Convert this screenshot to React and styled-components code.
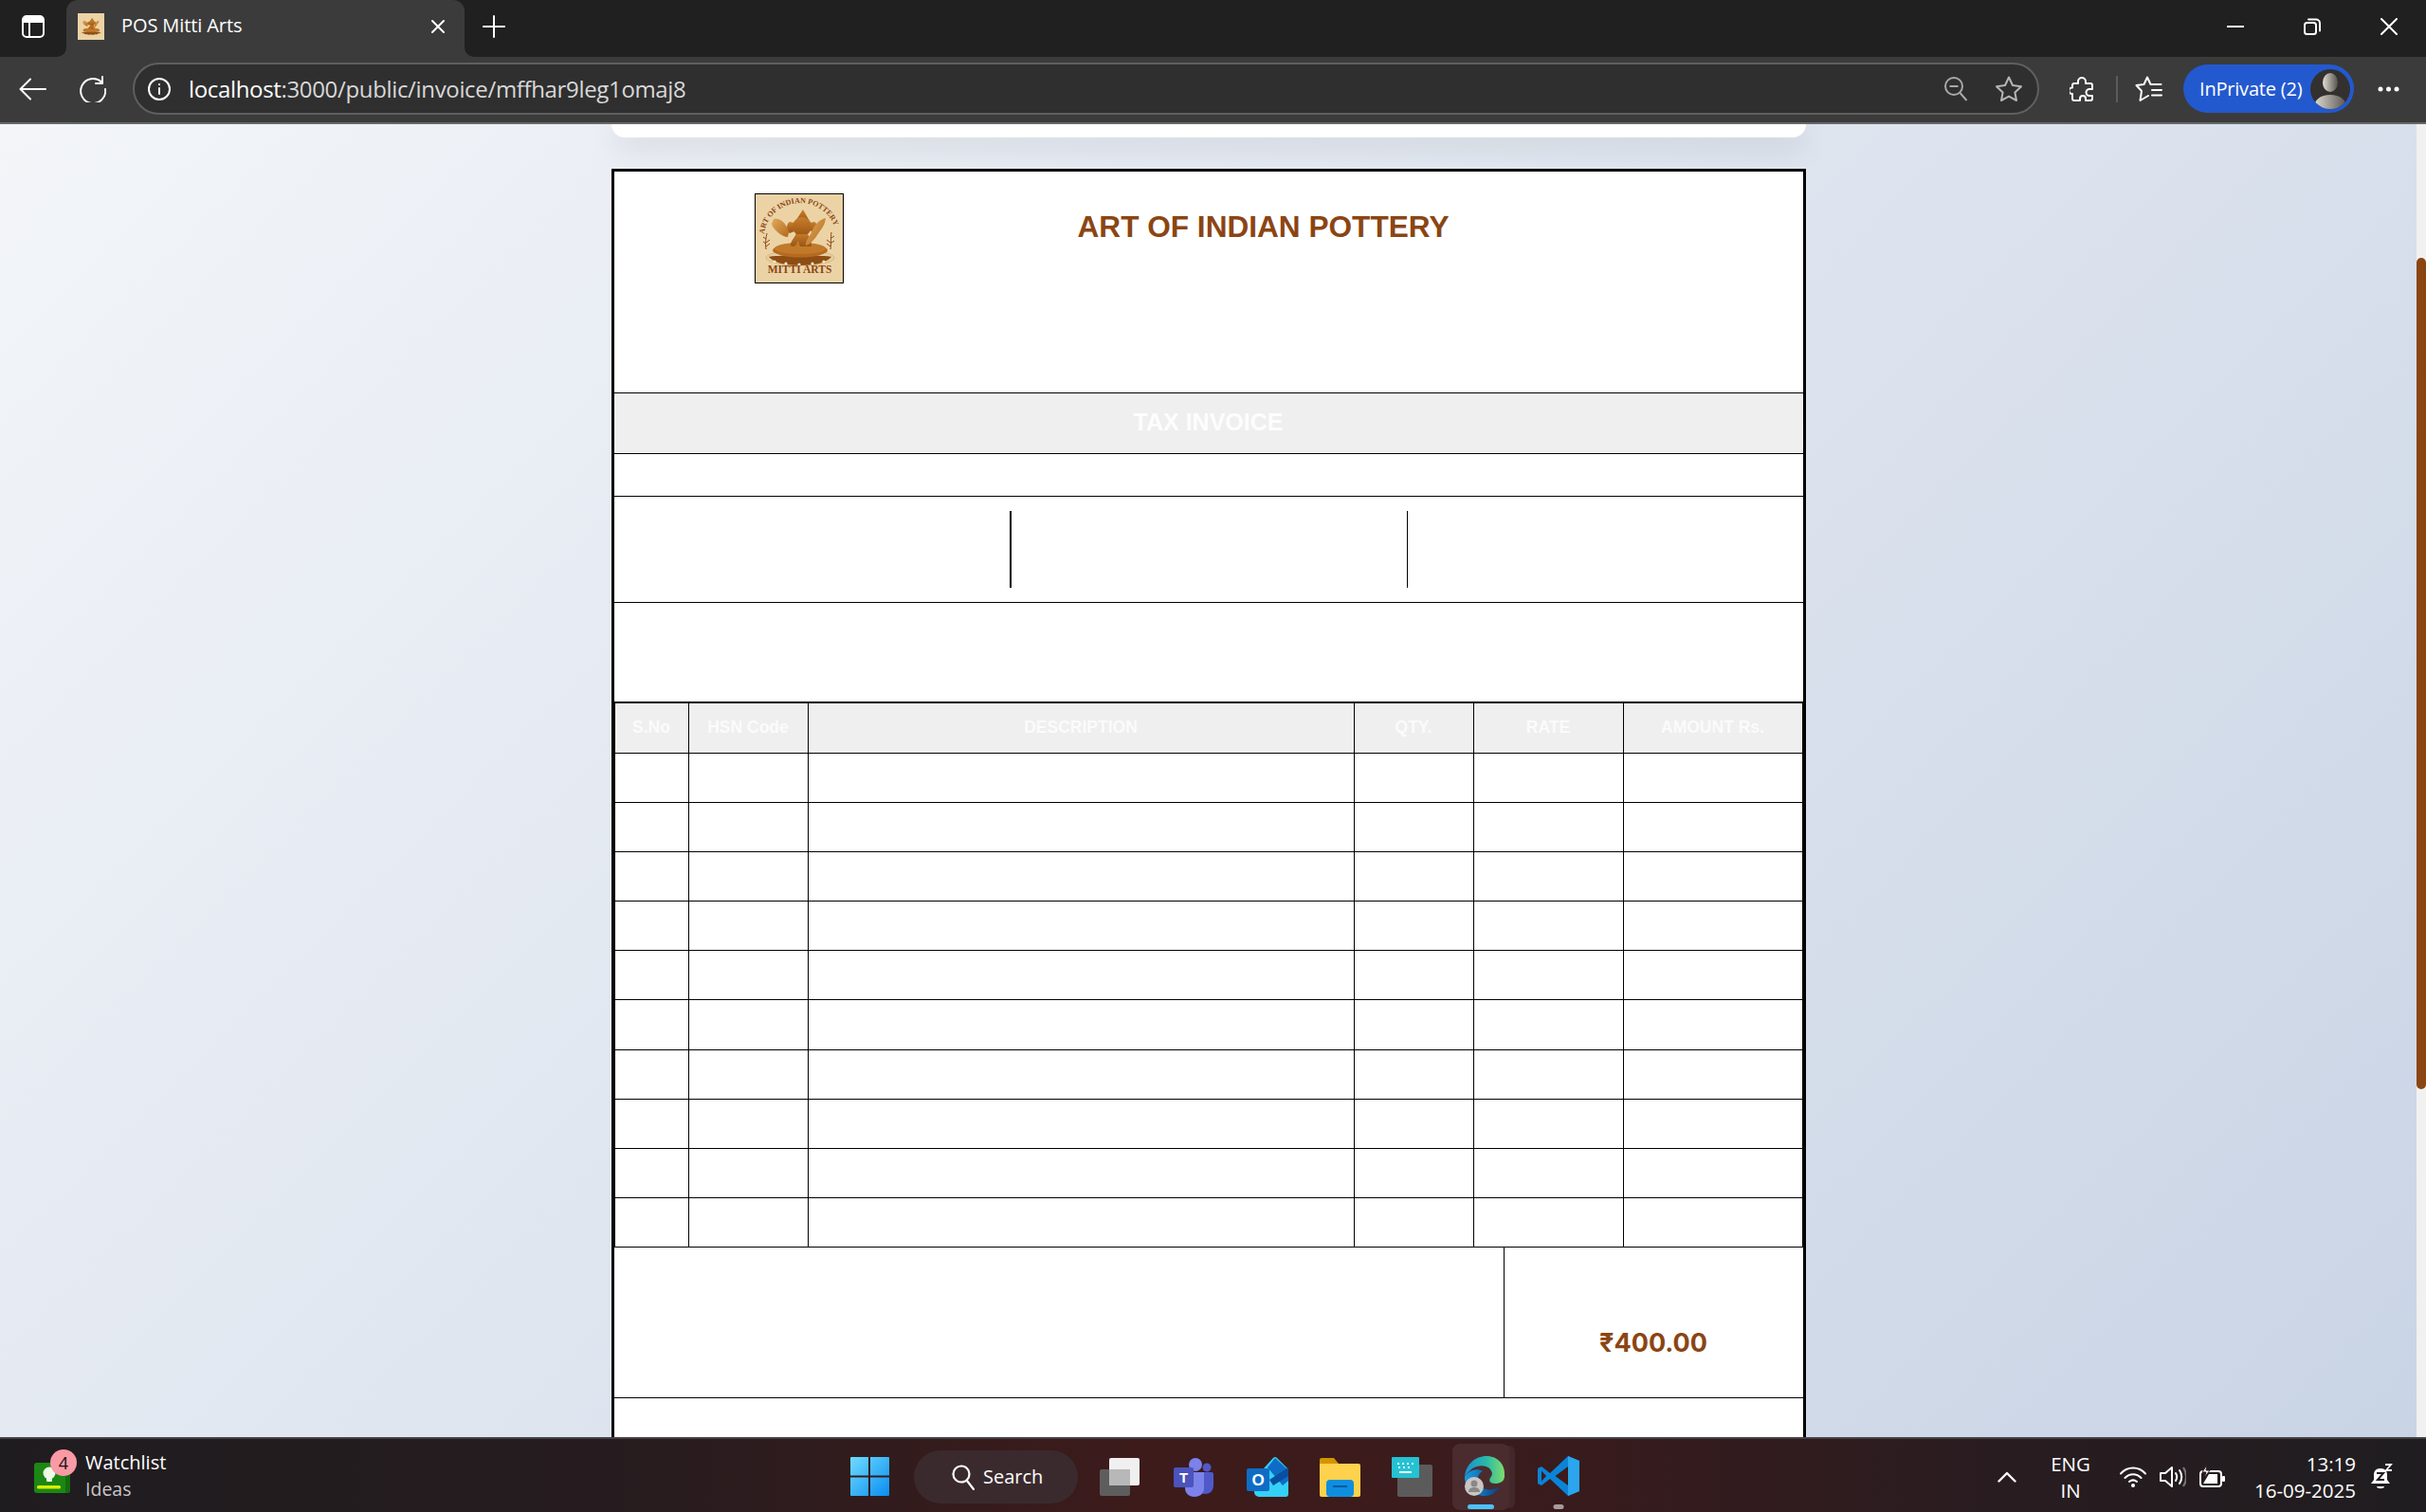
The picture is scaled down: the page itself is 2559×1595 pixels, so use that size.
import React from 'react';
import styled, { createGlobalStyle } from 'styled-components';

const Global = createGlobalStyle`
  html, body { margin: 0; padding: 0; overflow: hidden; background: #202020; }
  * { box-sizing: border-box; }
`;

const Screen = styled.div`
  width: 2559px; height: 1595px; display: flex; flex-direction: column; overflow: hidden;
  font-family: "Open Sans", "Noto Sans", sans-serif; color: #fff;
`;

/* ---------- browser chrome ---------- */
const TabBar = styled.div`
  flex: 0 0 60px; display: flex;
  background: linear-gradient(#202020 0 50%, #3b3b3b 50% 100%);
`;
const TabLeft = styled.div`
  flex: 0 0 70px; background: #202020; border-bottom-right-radius: 10px;
  display: flex; align-items: center; justify-content: center; padding: 0 1px 4px 0;
`;
const Tab = styled.div`
  flex: 0 0 420px; height: 60px; background: #3b3b3b; border-radius: 12px 12px 0 0;
  display: flex; align-items: center; padding: 0 20px 4px 12px;
`;
const TabTitle = styled.span`
  margin-left: 18px; font-size: 20px; flex: 1; white-space: nowrap; letter-spacing: -0.1px; line-height: 26px; padding-bottom: 2px;
`;
const TabRight = styled.div`
  flex: 1; background: #202020; border-bottom-left-radius: 10px;
  display: flex; align-items: center; padding-left: 19px; padding-bottom: 4px;
`;
const WinControls = styled.div`
  margin-left: auto; margin-right: -1px; display: flex;
`;
const WinButton = styled.div`
  width: 81px; height: 56px; display: flex; align-items: center; justify-content: center;
`;
const Toolbar = styled.div`
  flex: 0 0 71px; background: #3b3b3b; border-bottom: 2px solid #686868;
  display: flex; align-items: center; padding: 0 0 2px 20px;
`;
const Slot = styled.div`
  flex: 0 0 ${p => p.$w}px; margin-left: ${p => p.$ml || 0}px;
  display: flex; align-items: center; justify-content: center;
`;
const AddressBar = styled.div`
  flex: 0 0 2011px; margin-left: 28px; height: 55px; border-radius: 28px;
  background: #2f2f2f; border: 2px solid #5f5f5f;
  display: flex; align-items: center; padding: 0 16px 0 14px;
`;
const Url = styled.div`
  margin-left: 19px; flex: 1; font-size: 24px; letter-spacing: -0.34px; color: #d8d8d8; white-space: nowrap;
  & > b { font-weight: 400; color: #fff; }
`;
const Divider = styled.div`
  flex: 0 0 2px; height: 28px; margin-left: 23px; background: #5c5c5c;
`;
const ProfilePill = styled.div`
  flex: 0 0 180px; height: 51px; margin-left: 22px; border-radius: 26px; background: #2359cf;
  display: flex; align-items: center; padding: 0 4px 0 17px; font-size: 20px; letter-spacing: -0.2px;
  justify-content: space-between;
`;
const Avatar = styled.div`
  width: 42px; height: 42px; border-radius: 50%; overflow: hidden; background: #33312f; flex: none;
`;

/* ---------- page ---------- */
const Viewport = styled.div`
  flex: 1; min-height: 0; display: flex; overflow: hidden;
`;
const Page = styled.main`
  flex: 1; min-width: 0; overflow: hidden; display: flex; flex-direction: column; align-items: center;
  background: linear-gradient(135deg, #f5f7fa 0%, #c3cfe2 100%) no-repeat 0 -222px / 2549px 2187px;
`;
const ClippedCard = styled.div`
  flex: 0 0 14px; width: 1260px; background: #fff; border-radius: 0 0 20px 20px;
  box-shadow: 0 8px 32px rgba(0, 0, 0, 0.14);
`;
const Invoice = styled.section`
  flex: none; width: 1260px; margin-top: 33px; border: 3px solid #000; background: #fff;
  font-family: "Liberation Sans", Arial, sans-serif;
`;
const InvoiceHead = styled.header`
  height: 234px; border-bottom: 1px solid #000; display: flex; align-items: flex-start;
  padding: 23px 0 0 148px;
`;
const LogoFrame = styled.div`
  width: 94px; height: 95px; border: 1px solid #000; flex: none;
  & > svg { display: block; }
`;
const CompanyName = styled.h1`
  margin: 16px 0 0 247px; font-size: 31.6px; line-height: 38px; font-weight: 700; color: #8b4513; white-space: nowrap;
`;
const TaxBand = styled.div`
  height: 64px; border-bottom: 1px solid #000; background: #efefef; color: #fdfdfd;
  font-size: 25px; font-weight: 700; display: flex; align-items: center; justify-content: center; padding-bottom: 3px;
`;
const BlankRow = styled.div`
  height: ${p => p.$h}px; ${p => p.$line ? 'border-bottom: 1px solid #000;' : ''}
`;
const MetaRow = styled.div`
  height: 112px; border-bottom: 1px solid #000; display: flex; padding-top: 15px;
`;
const MetaCell = styled.div`
  height: 81px; flex: 0 0 ${p => p.$w}px; ${p => p.$w2 ? `border-right: ${p.$w2}px solid #000;` : ''}
`;
const TableWrap = styled.div`
  border-top: 2px solid #000; border-left: 1px solid #000; border-right: 1px solid #000;
`;
const GridRow = styled.div`
  display: grid; grid-template-columns: 78px 126px 576px 126px 158px 1fr;
  height: ${p => p.$head ? 53 : 52.1}px; border-bottom: 1px solid #000;
  background: ${p => p.$head ? '#efefef' : '#fff'};
`;
const HeadCell = styled.div`
  border-right: 1px solid #000; color: #fbfbfb; font-size: 17.5px; font-weight: 700; padding-bottom: 2px;
  display: flex; align-items: center; justify-content: center;
  &:last-child { border-right: 0; }
`;
const Cell = styled.div`
  border-right: 1px solid #000;
  &:last-child { border-right: 0; }
`;
const Totals = styled.div`
  height: 159px; border-bottom: 1px solid #000; display: flex;
`;
const TotalsLeft = styled.div`
  flex: 0 0 938px; border-right: 1px solid #000; margin-left: 1px;
`;
const TotalsAmount = styled.div`
  flex: 1; display: flex; align-items: flex-end; justify-content: center; padding: 0 0 40px 0;
  color: #8b4513; font-family: Inter, "Liberation Sans", sans-serif; font-size: 27px; font-weight: 700; line-height: 34px;
`;
const AfterTotals = styled.div` height: 140px; `;
const Scrollbar = styled.div`
  flex: 0 0 10px; background: #f1f1f1; padding-top: 141px;
`;
const Thumb = styled.div`
  height: 877px; background: #8b4513; border-radius: 5px;
`;

/* ---------- taskbar ---------- */
const Taskbar = styled.footer`
  flex: 0 0 79px; display: flex; align-items: center; border-top: 2px solid #454045; padding-top: 2px;
  background: linear-gradient(90deg, #1f1c1f 0%, #261c1f 25%, #3d1b1b 47%, #3c1b1c 60%, #291c20 82%, #1f1d20 100%);
`;
const WidgetArea = styled.div`
  flex: 0 0 897px; display: flex; align-items: center; padding-left: 36px;
`;
const WidgetIcon = styled.div`
  position: relative; width: 38px; height: 32px; flex: none; top: 1px;
`;
const WidgetBadge = styled.div`
  position: absolute; left: 17px; top: -14px; width: 28px; height: 28px; border-radius: 50%;
  background: #f99aa5; color: #111; font-size: 18px; display: flex; align-items: center; justify-content: center;
`;
const WidgetText = styled.div`
  margin: -2px 0 0 16px; display: flex; flex-direction: column; line-height: 28px;
`;
const WidgetTitle = styled.span` font-size: 20px; color: #fff; `;
const WidgetSub = styled.span` font-size: 19.5px; color: #c9c6c8; `;
const SearchPill = styled.div`
  flex: 0 0 173px; height: 56px; margin-left: 26px; border-radius: 28px; background: #3a2a2d;
  display: flex; align-items: center; padding-left: 40px; gap: 9px; font-size: 20px;
`;
const EdgeTile = styled.div`
  position: relative; flex: 0 0 60px; height: 70px; margin-left: 21px; border-radius: 8px;
  background: #4a2c2f; display: flex; align-items: center; justify-content: center; padding: 0 0 2px 8px;
  box-shadow: 8px 0 0 -2px #43282b;
`;
const RunDot = styled.span`
  position: absolute; bottom: 1px; left: 50%; transform: translateX(-50%);
  width: ${p => p.$w}px; height: 5px; border-radius: 3px; background: ${p => p.$c};
`;
const VsSlot = styled.div`
  position: relative; flex: 0 0 44px; height: 70px; margin-left: 30px;
  display: flex; align-items: center; justify-content: center; padding-bottom: 2px;
`;
const Lang = styled.div`
  flex: 0 0 60px; margin-left: 27px; text-align: center; font-size: 20.5px; line-height: 28px; color: #fff;
`;
const Clock = styled.div`
  flex: 0 0 110px; margin-left: 27px; text-align: right; font-size: 20.5px; line-height: 28px; white-space: nowrap; color: #fff;
`;

/* ---------- drawings ---------- */
const Line = { fill: 'none', stroke: 'currentColor', strokeWidth: 2, strokeLinecap: 'round', strokeLinejoin: 'round' };

const MittiLogo = ({ size = 92, detail = true }) => {
  const id = detail ? 'big' : 'small';
  return (
    <svg width={size} height={size * 93 / 92} viewBox="0 0 92 93">
      <defs>
        <path id={`arc-${id}`} d="M9 45 A36 34 0 0 1 85 45" />
        <linearGradient id={`clay-${id}`} x1="0" y1="0" x2="0" y2="1">
          <stop offset="0" stopColor="#c77e2c" />
          <stop offset="1" stopColor="#9c5514" />
        </linearGradient>
        <linearGradient id={`hand-${id}`} x1="0" y1="0" x2="1" y2="1">
          <stop offset="0" stopColor="#e0a95c" />
          <stop offset="1" stopColor="#b36a1e" />
        </linearGradient>
      </defs>
      <rect width="92" height="93" fill="#ecd3a6" />
      {detail && (
        <text fontFamily="Liberation Serif, serif" fontWeight="700" fontSize="8" fill="#8b4513">
          <textPath href={`#arc-${id}`} startOffset="3">ART OF INDIAN POTTERY</textPath>
        </text>
      )}
      <ellipse cx="47" cy="67" rx="36" ry="8" fill="#e6cfa0" stroke="#c9a567" strokeWidth="0.6" />
      <path d="M14 66c4 5 15 9 33 9s29-4 33-9c-3-2-64-2-66 0Z" fill="#8e4d12" />
      <ellipse cx="47" cy="59" rx="29" ry="7.500" fill="#b56a20" />
      <ellipse cx="47" cy="57" rx="27" ry="6" fill="#c27a2a" />
      <g fill={`url(#clay-${id})`}>
        <path d="M50 16 58 30H41Z" />
        <path d="M36 29c-4 2-4 10 0 12l5-2V30ZM62 29c4 2 4 9 0 11l-5-2v-8Z" />
        <circle cx="49" cy="34" r="10" />
        <path d="M43 40c-1 5-5 8-6 12-1 3 3 4 5 2l3-4 2 5h12c0-5-1-9-4-13H43Z" />
      </g>
      <path d="M19 26c8-2 14 6 16 14l-1 5c-6 0-16-8-17-14Z" fill={`url(#hand-${id})`} />
      <path d="M74 25c-1 9-6 13-9 18-3 5-8 10-12 11-1-5 4-9 6-14 2-7 9-14 15-15Z" fill={`url(#hand-${id})`} />
      <g fill="#f6ead0">
        <circle cx="20" cy="71" r="1.600" /><circle cx="32" cy="73" r="1.600" /><circle cx="46" cy="74" r="1.600" />
        <circle cx="60" cy="73" r="1.600" /><circle cx="72" cy="71" r="1.600" />
      </g>
      {detail && (
        <g fill="none" stroke="#8b4513" strokeWidth="1">
          <path d="M11 58C10 50 11 46 12 41M11 51l4-3M11 55l4-3M11 47l-3-2M11 52l-3-2" />
          <path d="M79 58c1-8 0-12 1-18M79 51l-4-3M79 55l-4-3M80 46l3-2M80 51l3-2" />
        </g>
      )}
      {detail && (
        <text x="46.500" y="83" textAnchor="middle" fontFamily="Liberation Serif, serif" fontWeight="700" fontSize="11.500" fill="#8b4513">MITTI ARTS</text>
      )}
    </svg>
  );
};

const Back = () => <svg width="29" height="24" viewBox="0 0 29 24"><path {...Line} d="M28 12H2M12 1.500 1.500 12 12 22.500" /></svg>;
const Refresh = () => <svg width="28" height="28" viewBox="0 0 28 28"><path {...Line} d="M23 6.500A13 13 0 1 0 27 14M24 1v7h-7" /></svg>;
const Info = () => <svg width="24" height="24" viewBox="0 0 24 24"><circle cx="12" cy="12" r="11" {...Line} /><path {...Line} d="M12 11v6M12 7v.2" /></svg>;
const ZoomOut = () => <svg width="24" height="26" viewBox="0 0 24 26"><circle cx="10" cy="10" r="9" fill="none" stroke="#a8a8a8" strokeWidth="2" /><path d="M5.500 10h9M16.500 17l7 8" fill="none" stroke="#a8a8a8" strokeWidth="2" /></svg>;
const Star = () => <svg width="28" height="27" viewBox="0 0 28 27"><path fill="none" stroke="#b5b5b5" strokeWidth="2" strokeLinejoin="round" d="M14 1.500 18 10l9 1.200-6.600 6.300L22 26l-8-4.400L6 26l1.600-8.500L1 11.200 10 10Z" /></svg>;
const Puzzle = () => <svg width="26" height="28" viewBox="0 0 26 28"><path {...Line} d="M9 6a4 4 0 0 1 8 0v2h5a2 2 0 0 1 2 2v4h-3a3.500 3.500 0 0 0 0 7h3v3a2 2 0 0 1-2 2h-5v-2a3 3 0 0 0-6 0v2H5a2 2 0 0 1-2-2v-5H2.500a3.200 3.200 0 0 1 0-6.400H3V10a2 2 0 0 1 2-2h4Z" /></svg>;
const FavList = () => <svg width="29" height="28" viewBox="0 0 29 28"><path {...Line} d="M16.500 9h11M18 15h10M18 20.500h10M16.500 9 13 1.500 9.500 9l-8 1L7 16 5.500 26l8.500-5" /></svg>;
const Dots = () => <svg width="23" height="6" viewBox="0 0 23 6"><circle cx="3" cy="3" r="2.500" fill="#fff" /><circle cx="11.500" cy="3" r="2.500" fill="#fff" /><circle cx="20" cy="3" r="2.500" fill="#fff" /></svg>;
const SideIcon = () => <svg width="26" height="26" viewBox="0 0 26 26"><rect x="2" y="2" width="22" height="22" rx="4" {...Line} /><path d="M3 3h20v6H3z" fill="#fff" /><path {...Line} d="M9 8v16" /></svg>;
const TabClose = () => <svg width="16" height="16" viewBox="0 0 16 16"><path {...Line} d="M2 2l12 12M14 2 2 14" /></svg>;
const Plus = () => <svg width="24" height="24" viewBox="0 0 24 24"><path {...Line} d="M12 1v22M1 12h22" /></svg>;
const WinMin = () => <svg width="18" height="2" viewBox="0 0 18 2"><path d="M0 1h18" stroke="#fff" strokeWidth="2" /></svg>;
const WinRestore = () => <svg width="18" height="18" viewBox="0 0 18 18"><rect x="1" y="5" width="12" height="12" rx="2.500" {...Line} /><path {...Line} d="M5 1.500h8a4 4 0 0 1 4 4v8" /></svg>;
const WinClose = () => <svg width="18" height="18" viewBox="0 0 18 18"><path {...Line} d="M1 1l16 16M17 1 1 17" /></svg>;
const AvatarArt = () => (
  <svg width="42" height="42" viewBox="0 0 42 42">
    <defs>
      <linearGradient id="av" x1="0" x2="1"><stop offset="0" stopColor="#e3dfd6" /><stop offset="1" stopColor="#55524d" /></linearGradient>
    </defs>
    <ellipse cx="21" cy="14" rx="8" ry="10" fill="url(#av)" />
    <path d="M3 42c1-10 8-15 18-15s17 5 18 15Z" fill="url(#av)" />
  </svg>
);

const WidgetArt = () => (
  <svg width="38" height="32" viewBox="0 0 38 32">
    <path d="M3 0h30v32H3a3 3 0 0 1-3-3V3a3 3 0 0 1 3-3Z" fill="#1c8714" />
    <path d="M33 1h2a3 3 0 0 1 3 3v26a2 2 0 0 1-2 2h-3Z" fill="#136b10" />
    <circle cx="16" cy="11" r="6.500" fill="#eefbe6" /><rect x="13" y="16" width="6" height="4" rx="1" fill="#eefbe6" />
    <rect x="3" y="24" width="25" height="3.500" rx="1.500" fill="#d6ee00" />
  </svg>
);
const StartLogo = () => (
  <svg width="41" height="41" viewBox="0 0 41 41">
    <defs>
      <linearGradient id="win" x1="0" y1="0" x2="1" y2="1"><stop offset="0" stopColor="#6fdcff" /><stop offset="1" stopColor="#0a8df0" /></linearGradient>
    </defs>
    <path fill="url(#win)" d="M1 0h18v19.500H0V1a1 1 0 0 1 1-1ZM21 0h19a1 1 0 0 1 1 1v18.500H21ZM0 21.500h19V41H1a1 1 0 0 1-1-1ZM21 21.500h20V40a1 1 0 0 1-1 1H21Z" />
  </svg>
);
const SearchGlass = () => <svg width="24" height="28" viewBox="0 0 24 28"><circle cx="10" cy="11" r="8.500" fill="none" stroke="#fff" strokeWidth="2.200" /><path d="M16 18l7 9" stroke="#fff" strokeWidth="2.200" strokeLinecap="round" /></svg>;
const TaskView = () => (
  <svg width="43" height="40" viewBox="0 0 43 40">
    <rect x="0" y="12" width="32" height="28" rx="2" fill="#5e5d5e" />
    <rect x="10" y="0" width="32" height="29" rx="2" fill="#f1f0f0" />
    <rect x="10" y="12" width="22" height="17" fill="#b9b8b8" />
  </svg>
);
const Teams = () => (
  <svg width="42" height="42" viewBox="0 0 42 42">
    <circle cx="23" cy="8" r="7" fill="#7b83eb" /><circle cx="35" cy="11" r="4.500" fill="#5059c9" />
    <path d="M27 16h13a2 2 0 0 1 2 2v12c0 6-4 9-9 9-3 0-4-1-6-2Z" fill="#5059c9" />
    <path d="M12 16h20v17c0 5-4 9-10 9s-10-4-10-9Z" fill="#7b83eb" />
    <rect x="0" y="11" width="21" height="21" rx="2" fill="#4b53bc" />
    <text x="10.500" y="27" textAnchor="middle" fontFamily="Liberation Sans, sans-serif" fontWeight="700" fontSize="15" fill="#fff">T</text>
  </svg>
);
const Outlook = () => (
  <svg width="45" height="44" viewBox="0 0 45 44">
    <path d="M8 24 28 2a3 3 0 0 1 4 0l12 12v26a3 3 0 0 1-3 3H13a5 5 0 0 1-5-5Z" fill="#35d0f5" />
    <path d="M22 12 30 2l14 13v11L38 31Z" fill="#0f6cc6" /><path d="M24 25 44 12v9L28 31Z" fill="#0a4f9e" />
    <rect x="0" y="13" width="24" height="24" rx="2" fill="#0f6cc6" />
    <text x="12" y="31" textAnchor="middle" fontFamily="Liberation Sans, sans-serif" fontWeight="700" fontSize="17" fill="#fff">O</text>
  </svg>
);
const Explorer = () => (
  <svg width="43" height="42" viewBox="0 0 43 42">
    <path d="M0 3a2 2 0 0 1 2-2h13l5 6h-20Z" fill="#d49400" />
    <path d="M0 7h41a2 2 0 0 1 2 2v31a2 2 0 0 1-2 2H2a2 2 0 0 1-2-2Z" fill="#ffd24d" />
    <rect x="7" y="24" width="29" height="18" rx="4" fill="#0f8ee0" /><rect x="14" y="30" width="15" height="2" fill="#075aa4" />
  </svg>
);
const KeyApp = () => (
  <svg width="43" height="42" viewBox="0 0 43 42">
    <rect x="6" y="8" width="37" height="34" rx="2" fill="#5b5b5c" />
    <rect x="0" y="0" width="29" height="22" rx="1" fill="#25c2d3" />
    <path d="M6 7h2M11 7h2M16 7h2M21 7h2M7 11h2M12 11h2M17 11h2M8 16h13" stroke="#eafcff" strokeWidth="1.800" />
  </svg>
);
const EdgeIcon = () => (
  <svg width="44" height="44" viewBox="0 0 44 44">
    <defs>
      <linearGradient id="edge-top" x1="0" x2="1"><stop offset="0" stopColor="#1a8fd6" /><stop offset="0.55" stopColor="#2bb9a6" /><stop offset="1" stopColor="#7fdc6c" /></linearGradient>
      <linearGradient id="edge-low" x1="0" x2="1"><stop offset="0" stopColor="#1b9de2" /><stop offset="1" stopColor="#0a3f86" /></linearGradient>
    </defs>
    <path fill="url(#edge-top)" d="M1 23C2 10 12 1 24 1c12 0 20 9 19 21 0 6-5 8-10 8s-7-3-5-6c2-3 3-5 0-9C24 10 14 10 8 15c-3 3-6 5-7 8Z" />
    <path fill="url(#edge-low)" d="M1 23c4-7 13-10 19-6-6 3-7 11-2 16 6 6 16 3 20 0-4 7-10 10-16 10C10 43 1 34 1 23Z" />
    <circle cx="11" cy="33" r="10" fill="#c9c6c4" />
    <circle cx="11" cy="30" r="3.500" fill="#8a8886" /><path d="M5 39c0-4 3-5 6-5s6 1 6 5Z" fill="#8a8886" />
  </svg>
);
const VsCode = () => (
  <svg width="44" height="42" viewBox="0 0 44 42">
    <path d="M32 0 13 18 4 11 0 13v16l4 2 9-7 19 18 12-5V5Z" fill="#0a84d8" />
    <path d="M32 0 44 5v32l-12 5Z" fill="#2aa5ee" />
    <path d="M32 11 18.500 21 32 31Z" fill="#3c1b1c" />
    <path d="M4 15.500 9 21l-5 5.500Z" fill="#3c1b1c" />
  </svg>
);
const Chevron = () => <svg width="20" height="12" viewBox="0 0 20 12"><path {...Line} strokeWidth="2.400" d="M1.500 10.500 10 2l8.500 8.500" /></svg>;
const Wifi = () => <svg width="28" height="22" viewBox="0 0 28 22"><path {...Line} d="M1 7.500C8-.5 20-.5 27 7.500M5.500 12c5-5 12-5 17 0M10 16c2.500-2 5.500-2 8 0" /><circle cx="14" cy="20" r="2" fill="#fff" /></svg>;
const Speaker = () => <svg width="28" height="24" viewBox="0 0 28 24"><path {...Line} d="M1 8v8h5l7 6V2L6 8Z" /><path {...Line} d="M17 8c1.500 2.500 1.500 5.500 0 8M21 5c3 4 3 10 0 14" /><path d="M25 2c4 6 4 14 0 20" fill="none" stroke="#777" strokeWidth="2" /></svg>;
const Battery = () => <svg width="28" height="26" viewBox="0 0 28 26"><rect x="1" y="7" width="22" height="16" rx="3" {...Line} /><path d="M4 20l6-10h9v10Z" fill="#fff" /><rect x="24" y="12" width="3" height="6" rx="1" fill="#fff" /><path d="M8 0 3 8h4l-2 6 6-8H7Z" fill="#fff" stroke="#2a1c20" /></svg>;
const BellSnooze = () => (
  <svg width="24" height="28" viewBox="0 0 24 28">
    <path d="M11 5c5 0 7 3 7 7v5l3 4H1l3-4v-5c0-4 2-7 7-7Z" fill="#fff" />
    <path d="M7 24h8c0 3-8 3-8 0Z" fill="#fff" />
    <path d="M7 10h7l-6 7h7" fill="none" stroke="#201d20" strokeWidth="2" />
    <path d="M16 1h6l-5 6h6" fill="none" stroke="#fff" strokeWidth="1.800" />
  </svg>
);

const columns = ['S.No', 'HSN Code', 'DESCRIPTION', 'QTY.', 'RATE', 'AMOUNT Rs.'];
const rows = Array.from({ length: 10 }, (_, i) => i);

export default function App() {
  return (
    <Screen>
      <Global />
      <TabBar>
        <TabLeft><SideIcon /></TabLeft>
        <Tab>
          <MittiLogo size={28} detail={false} />
          <TabTitle>POS Mitti Arts</TabTitle>
          <TabClose />
        </Tab>
        <TabRight>
          <Plus />
          <WinControls>
            <WinButton><WinMin /></WinButton>
            <WinButton><WinRestore /></WinButton>
            <WinButton><WinClose /></WinButton>
          </WinControls>
        </TabRight>
      </TabBar>
      <Toolbar>
        <Slot $w={29}><Back /></Slot>
        <Slot $w={28} $ml={35}><Refresh /></Slot>
        <AddressBar>
          <Info />
          <Url><b>localhost</b>:3000/public/invoice/mffhar9leg1omaj8</Url>
          <ZoomOut />
          <Slot $w={28} $ml={30}><Star /></Slot>
        </AddressBar>
        <Slot $w={25} $ml={32}><Puzzle /></Slot>
        <Divider />
        <Slot $w={28} $ml={18}><FavList /></Slot>
        <ProfilePill>
          InPrivate (2)
          <Avatar><AvatarArt /></Avatar>
        </ProfilePill>
        <Slot $w={23} $ml={25}><Dots /></Slot>
      </Toolbar>
      <Viewport>
        <Page>
          <ClippedCard />
          <Invoice>
            <InvoiceHead>
              <LogoFrame><MittiLogo /></LogoFrame>
              <CompanyName>ART OF INDIAN POTTERY</CompanyName>
            </InvoiceHead>
            <TaxBand>TAX INVOICE</TaxBand>
            <BlankRow $h={45} $line />
            <MetaRow>
              <MetaCell $w={419} $w2={2} />
              <MetaCell $w={418} $w2={1} />
              <MetaCell $w={417} />
            </MetaRow>
            <BlankRow $h={104} />
            <TableWrap>
              <GridRow $head>
                {columns.map(c => <HeadCell key={c}>{c}</HeadCell>)}
              </GridRow>
              {rows.map(r => (
                <GridRow key={r}>
                  {columns.map(c => <Cell key={c} />)}
                </GridRow>
              ))}
            </TableWrap>
            <Totals>
              <TotalsLeft />
              <TotalsAmount>₹400.00</TotalsAmount>
            </Totals>
            <AfterTotals />
          </Invoice>
        </Page>
        <Scrollbar><Thumb /></Scrollbar>
      </Viewport>
      <Taskbar>
        <WidgetArea>
          <WidgetIcon>
            <WidgetArt />
            <WidgetBadge>4</WidgetBadge>
          </WidgetIcon>
          <WidgetText>
            <WidgetTitle>Watchlist</WidgetTitle>
            <WidgetSub>Ideas</WidgetSub>
          </WidgetText>
        </WidgetArea>
        <Slot $w={41}><StartLogo /></Slot>
        <SearchPill><SearchGlass />Search</SearchPill>
        <Slot $w={43} $ml={23}><TaskView /></Slot>
        <Slot $w={42} $ml={35}><Teams /></Slot>
        <Slot $w={45} $ml={35}><Outlook /></Slot>
        <Slot $w={43} $ml={32}><Explorer /></Slot>
        <Slot $w={43} $ml={33}><KeyApp /></Slot>
        <EdgeTile><EdgeIcon /><RunDot $w={28} $c="#4cc2ff" /></EdgeTile>
        <VsSlot><VsCode /><RunDot $w={11} $c="#a89a9c" /></VsSlot>
        <Slot $w={20} $ml={441}><Chevron /></Slot>
        <Lang>ENG<br />IN</Lang>
        <Slot $w={28} $ml={22}><Wifi /></Slot>
        <Slot $w={28} $ml={14}><Speaker /></Slot>
        <Slot $w={28} $ml={14}><Battery /></Slot>
        <Clock>13:19<br />16-09-2025</Clock>
        <Slot $w={24} $ml={15}><BellSnooze /></Slot>
      </Taskbar>
    </Screen>
  );
}
